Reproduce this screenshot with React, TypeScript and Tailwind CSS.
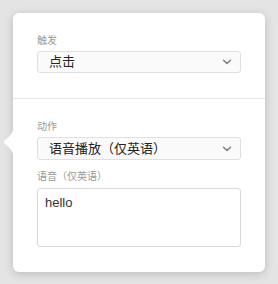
import React from 'react';

const Chevron = () => (
  <svg width="10" height="6" viewBox="0 0 10 6" className="text-[#7a7a7a]">
    <path d="M1.5 1.2 L5 4.6 L8.5 1.2" fill="none" stroke="currentColor" strokeWidth="1.4" strokeLinecap="round" strokeLinejoin="round" />
  </svg>
);

function Select({ value, h }: { value: string; h: string }) {
  return (
    <div className={`flex ${h} items-center justify-between rounded-[3px] border border-[#e0e0e0] bg-[#fafafa] pl-[11px] pr-[8px]`}>
      <span className="text-[13px] text-[#222]">{value}</span>
      <Chevron />
    </div>
  );
}

export default function App() {
  return (
    <div
      className="h-[284px] w-[278px] bg-[#e4e4e4] pl-[13px] pt-[13px]"
      style={{ fontFamily: '"Liberation Sans", "Noto Sans CJK SC", sans-serif' }}
    >
      <div className="relative w-[252px] rounded-[6px] bg-white shadow-[0_2px_10px_rgba(0,0,0,0.18)]">
        {/* pointer */}
        <svg width="11" height="30" viewBox="0 0 11 30" className="absolute left-[-10px] top-[114px]">
          <path d="M11 0 C10 6 6 10 1 14 Q0 15 1 16 C6 20 10 24 11 30 Z" fill="#ffffff" />
        </svg>

        <div className="px-[24px] pb-[25px] pt-[21px]">
          <div className="mb-[3px] h-[14px] text-[10px] leading-[14px] text-[#9a9a9a]">触发</div>
          <Select value="点击" h="h-[22px]" />
        </div>

        <div className="border-t border-[#e6e6e6] px-[24px] pb-[25px] pt-[21px]">
          <div className="mb-[3px] h-[14px] text-[10px] leading-[14px] text-[#9a9a9a]">动作</div>
          <Select value="语音播放（仅英语）" h="h-[23px]" />
          <div className="mb-[4px] mt-[10px] h-[14px] text-[10px] leading-[14px] text-[#9a9a9a]">语音（仅英语）</div>
          <div className="h-[59px] rounded-[3px] border border-[#d9d9d9] bg-white px-[7px] pt-[5px] text-[13px] leading-[18px] text-[#333]">
            hello
          </div>
        </div>
      </div>
    </div>
  );
}
